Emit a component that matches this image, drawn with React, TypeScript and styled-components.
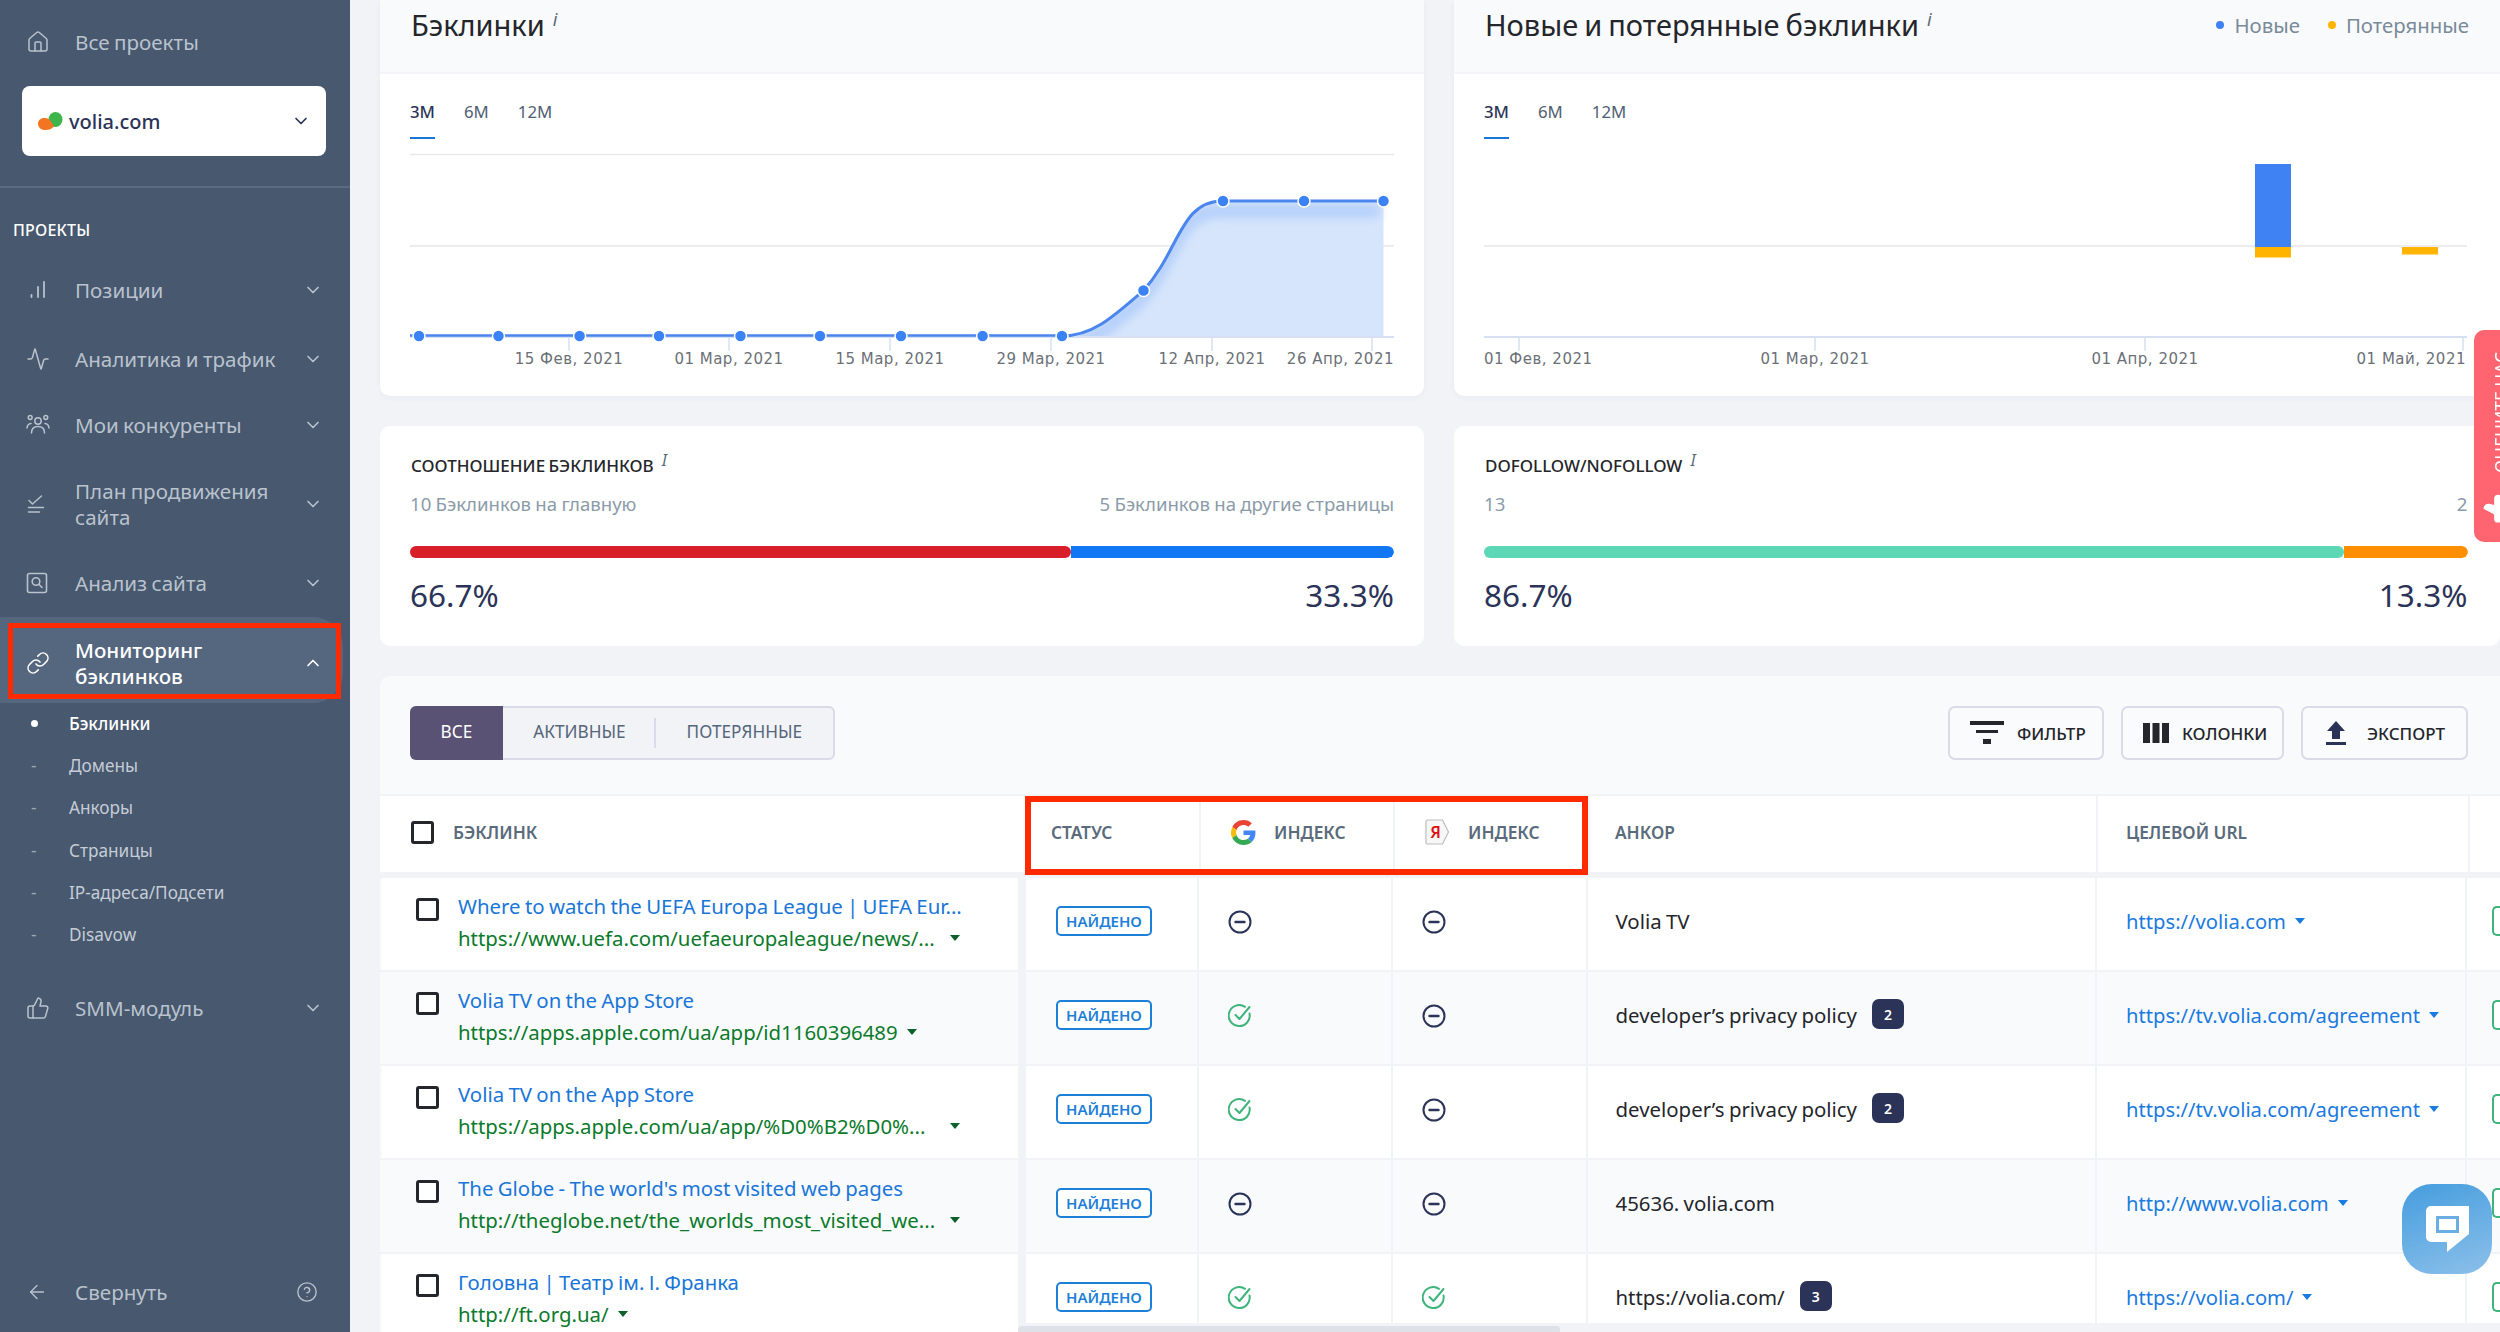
import React from 'react';
import styled, { createGlobalStyle } from 'styled-components';
import {
  Activity,
  ArrowLeft,
  ChevronDown,
  ChevronUp,
  CircleHelp,
  House,
  Link as LinkIcon,
  ThumbsUp,
} from 'lucide-react';

const FONT = '"Noto Sans", "Open Sans", sans-serif';
const HEAD_COLS = '645px 174px 194px 195px 508px 372px 31px';
const BODY_COLS = '638px 8px 171px 194px 194.5px 509.5px 370px 35px';

const GlobalStyle = createGlobalStyle`
  html, body {
    margin: 0;
    padding: 0;
    background: #f2f3f7;
    font-family: ${FONT};
  }
  * { box-sizing: border-box; }
`;

const Page = styled.div`
  position: relative;
  display: flex;
  width: 2500px;
  height: 1332px;
  overflow: hidden;
  background: #f2f3f7;
`;

/* ---------- sidebar ---------- */

const Sidebar = styled.aside`
  flex: 0 0 350px;
  display: flex;
  flex-direction: column;
  height: 100%;
  background: #47586f;
  color: #b9c2cd;
`;

const TopLink = styled.div`
  display: flex;
  align-items: center;
  height: 66px;
  margin-top: 9px;
  padding-left: 26px;
  font-size: 20.6px;
  word-spacing: -1px;
`;

const IconSlot = styled.span`
  flex: 0 0 49px;
  display: flex;
  align-items: center;
  color: #b9c2cd;
  svg { display: block; }
`;

const ProjectSelect = styled.div`
  display: flex;
  align-items: center;
  height: 70px;
  margin: 11px 24px 0 22px;
  padding: 0 15px 0 16px;
  background: #fff;
  border-radius: 8px;
  color: #2b3358;
  font-size: 20px;
  font-weight: 500;
  svg { flex: none; }
  span { flex: 1; margin-left: 6px; }
`;

const Divider = styled.div`
  height: 2px;
  margin-top: 30px;
  background: #5a6a80;
`;

const SectionLabel = styled.div`
  height: 20px;
  margin: 32px 0 16.5px 13px;
  color: #fff;
  font-size: 16px;
  line-height: 20px;
  font-weight: 500;
  letter-spacing: 0.2px;
`;

const NavItem = styled.div<{ $tall?: boolean; $after?: number }>`
  display: flex;
  align-items: center;
  min-height: ${(p) => (p.$tall ? 92 : 66)}px;
  margin-bottom: ${(p) => p.$after ?? 0}px;
  padding: 0 27px 0 26px;
  font-size: 20.6px;
  line-height: 26px;
  word-spacing: -1px;
`;

const ActiveItem = styled.div`
  position: relative;
  display: flex;
  align-items: center;
  height: 86px;
  margin: 1px 7px 0 0;
  padding: 6px 20px 0 26px;
  background: #55667f;
  border-radius: 0 30px 30px 0;
  color: #fff;
  font-size: 20.6px;
  line-height: 26px;
  font-weight: 500;
  ${IconSlot} { color: #fff; }
  &::after {
    content: '';
    position: absolute;
    left: 8px;
    right: 2px;
    top: 6px;
    bottom: 4px;
    border: 5px solid #ff2a00;
  }
`;

const NavText = styled.span`
  flex: 1;
`;

const SubList = styled.div`
  margin: -1px 0 19.5px;
`;

const SubItem = styled.div<{ $current?: boolean }>`
  display: flex;
  align-items: center;
  height: 42.3px;
  padding-left: 31px;
  color: ${(p) => (p.$current ? '#fff' : '#c5ccd6')};
  font-size: 17.2px;
  font-weight: ${(p) => (p.$current ? 500 : 400)};
  &::before {
    content: '${(p) => (p.$current ? '' : '-')}';
    flex: none;
    width: 7px;
    height: ${(p) => (p.$current ? '7px' : 'auto')};
    margin-right: 31px;
    border-radius: 50%;
    background: ${(p) => (p.$current ? '#fff' : 'transparent')};
    color: #9ba6b4;
  }
`;

const SidebarFooter = styled.div`
  display: flex;
  align-items: center;
  margin-top: auto;
  height: 40px;
  margin-bottom: 20px;
  padding: 0 32px 0 26px;
  font-size: 20.6px;
`;

/* ---------- main ---------- */

const Main = styled.main`
  flex: 1;
  min-width: 0;
  padding-left: 30px;
  display: flex;
  flex-direction: column;
  gap: 30px;
`;

const CardGrid = styled.div`
  display: grid;
  grid-template-columns: 1044px 1046px;
  column-gap: 30px;
  row-gap: 30px;
`;

const ChartCard = styled.section`
  height: 396px;
  background: #fff;
  border-radius: 0 0 10px 10px;
  box-shadow: 0 2px 6px rgba(50, 60, 90, 0.04);
`;

const ChartHead = styled.header`
  display: flex;
  align-items: flex-start;
  justify-content: space-between;
  height: 74px;
  padding: 5px 31px 0 31px;
  background: #f9fafc;
  border-bottom: 2px solid #f4f5f8;
`;

const ChartTitle = styled.h2`
  margin: 0;
  color: #24262b;
  font-size: 29px;
  line-height: 40px;
  font-weight: 400;
  word-spacing: -1.5px;
`;

const Hint = styled.sup<{ $small?: boolean }>`
  margin-left: 8px;
  color: #5a6b7b;
  font-size: ${(p) => (p.$small ? 16 : 18)}px;
  font-style: italic;
  font-weight: 400;
  line-height: 0;
  vertical-align: ${(p) => (p.$small ? 6 : 10)}px;
`;

const Legend = styled.div`
  display: flex;
  gap: 28px;
  margin-top: 5px;
  color: #7a8b99;
  font-size: 20.4px;
  line-height: 30px;
`;

const LegendItem = styled.span<{ $color: string }>`
  display: flex;
  align-items: center;
  gap: 10px;
  &::before {
    content: '';
    width: 8px;
    height: 8px;
    border-radius: 50%;
    background: ${(p) => p.$color};
  }
`;

const RangeTabs = styled.div`
  display: flex;
  gap: 29px;
  height: 40px;
  margin: 24px 0 0 30px;
`;

const RangeTab = styled.div<{ $active?: boolean }>`
  height: 41px;
  padding-top: 2px;
  color: ${(p) => (p.$active ? '#2b3358' : '#4f6072')};
  font-size: 16.8px;
  line-height: 24px;
  font-weight: ${(p) => (p.$active ? 500 : 400)};
  border-bottom: ${(p) => (p.$active ? '2px solid #1976d8' : '2px solid transparent')};
`;

const ChartSvg = styled.svg`
  display: block;
  margin-top: 12px;
  text {
    fill: #6b7076;
    font-family: "DejaVu Sans", sans-serif;
    font-size: 15px;
    letter-spacing: 0.5px;
  }
`;

const RatioCard = styled.section<{ $right: number }>`
  height: 220px;
  padding: 26px ${(p) => p.$right}px 0 30px;
  background: #fff;
  border-radius: 10px;
`;

const RatioTitle = styled.h3`
  margin: 0;
  padding-left: 1px;
  color: #24262b;
  font-size: 17px;
  line-height: 28px;
  font-weight: 500;
  text-transform: uppercase;
  word-spacing: -1px;
`;

const RatioRow = styled.div`
  display: flex;
  justify-content: space-between;
`;

const RatioCaption = styled(RatioRow)`
  margin-top: 10px;
  color: #8b9ba9;
  font-size: 18.6px;
  line-height: 28px;
  word-spacing: -0.5px;
`;

const RatioBar = styled.div`
  display: flex;
  height: 12px;
  margin-top: 28px;
  border-radius: 6px;
  overflow: hidden;
`;

const RatioFill = styled.div<{ $color: string }>`
  background: ${(p) => p.$color};
  border-radius: 0 6px 6px 0;
  &:first-child { position: relative; z-index: 1; }
`;

const RatioValues = styled(RatioRow)`
  margin-top: 15px;
  color: #2b3358;
  font-size: 31.5px;
  line-height: 44px;
  font-weight: 400;
`;

/* ---------- table ---------- */

const TablePanel = styled.section`
  flex: 1;
  min-height: 0;
  position: relative;
  overflow: hidden;
  background: #f9fafc;
  border-radius: 10px 0 0 0;
`;

const Toolbar = styled.div`
  display: flex;
  align-items: center;
  justify-content: space-between;
  height: 116px;
  padding: 0 32px 6px 30px;
  margin-top: 2px;
`;

const Segments = styled.div`
  display: flex;
  align-items: center;
  height: 54px;
  border: 2px solid #d9dce8;
  border-radius: 6px;
  background: #f2f3f7;
`;

const Segment = styled.div<{ $active?: boolean; $line?: boolean }>`
  display: flex;
  align-items: center;
  justify-content: center;
  position: relative;
  height: 54px;
  padding: 0 30.5px 3px;
  margin: ${(p) => (p.$active ? '0 0 0 -2px' : '0')};
  background: ${(p) => (p.$active ? '#5a5275' : 'transparent')};
  border-radius: ${(p) => (p.$active ? '6px 0 0 6px' : '0')};
  color: ${(p) => (p.$active ? '#fff' : '#56667a')};
  font-size: 17.2px;
  font-weight: 400;
  &::after {
    content: '';
    display: ${(p) => (p.$line ? 'block' : 'none')};
    position: absolute;
    right: 0;
    top: 12px;
    bottom: 12px;
    width: 2px;
    background: #d9dce8;
  }
`;

const ToolButtons = styled.div`
  display: flex;
  gap: 17px;
`;

const ToolButton = styled.div<{ $w: number; $pad?: number; $gap?: number }>`
  display: flex;
  align-items: center;
  gap: ${(p) => p.$gap ?? 13}px;
  width: ${(p) => p.$w}px;
  height: 54px;
  padding-left: ${(p) => p.$pad ?? 20}px;
  border: 2px solid #d9dce8;
  border-radius: 7px;
  background: #fafbfd;
  color: #24262b;
  font-size: 17px;
  font-weight: 500;
`;

const HeadRow = styled.div`
  display: grid;
  grid-template-columns: ${HEAD_COLS};
  height: 78px;
  background: #fff;
  border-top: 2px solid #f2f3f7;
`;

const HeadCell = styled.div<{ $pad?: number; $gap?: number }>`
  display: flex;
  align-items: center;
  gap: ${(p) => p.$gap ?? 18}px;
  padding: 0 0 4px ${(p) => p.$pad ?? 30}px;
  border-left: 2px solid #f2f3f7;
  color: #5a6b7b;
  font-size: 17.3px;
  font-weight: 600;
  &:first-child { border-left: 0; }
`;

const HeadGroup = styled.div`
  position: relative;
  grid-column: span 3;
  display: grid;
  grid-template-columns: 174px 194px 195px;
  &::after {
    content: '';
    position: absolute;
    left: 0;
    right: 0;
    top: 0;
    bottom: -3px;
    border: 6px solid #ff2a00;
  }
`;

const BodySpacer = styled.div`
  height: 6px;
  background: #f2f3f7;
`;

const BodyRow = styled.div<{ $alt?: boolean }>`
  display: grid;
  grid-template-columns: ${BODY_COLS};
  height: 94px;
  background: ${(p) => (p.$alt ? '#f9fafc' : '#fff')};
  border-bottom: 2px solid #f2f3f7;
`;

const Gutter = styled.div`
  background: #f2f3f7;
`;

const Cell = styled.div<{ $pad?: number }>`
  display: flex;
  align-items: center;
  padding: 0 0 6px ${(p) => p.$pad ?? 30}px;
  border-left: 2px solid #f2f3f7;
  color: #24262b;
  font-size: 20.4px;
  word-spacing: -1px;
  &:nth-child(3) { border-left: 0; }
  > svg { margin-top: 2px; }
`;

const LinkCell = styled.div`
  display: flex;
  align-items: flex-start;
  gap: 19px;
  padding: 20px 0 0 34px;
  border-left: 2px solid #f9fafc;
`;

const Box = styled.span`
  flex: none;
  display: block;
  width: 23px;
  height: 23px;
  border: 3px solid #24262b;
  border-radius: 3px;
  background: #fff;
`;

const LinkText = styled.div`
  margin-top: -8px;
  font-size: 20.4px;
  line-height: 32px;
  white-space: nowrap;
  word-spacing: -1px;
`;

const PageLink = styled.div`
  color: #1976d8;
`;

const SourceUrl = styled.div<{ $cut?: boolean }>`
  display: flex;
  align-items: center;
  justify-content: ${(p) => (p.$cut ? 'space-between' : 'flex-start')};
  width: ${(p) => (p.$cut ? '502px' : 'auto')};
  color: #0b7a2b;
`;

const Caret = styled.span<{ $color?: string }>`
  flex: none;
  width: 0;
  height: 0;
  margin-left: 9px;
  border-left: 5px solid transparent;
  border-right: 5px solid transparent;
  border-top: 6px solid ${(p) => p.$color ?? '#0d5f2c'};
`;

const FoundTag = styled.span`
  display: flex;
  align-items: center;
  justify-content: center;
  width: 96px;
  height: 30px;
  border: 2px solid #1e7fd8;
  border-radius: 5px;
  background: #fff;
  color: #1e7fd8;
  font-size: 15px;
  font-weight: 600;
`;

const CountBadge = styled.span`
  display: flex;
  align-items: center;
  justify-content: center;
  width: 32px;
  height: 30px;
  margin: -2px 0 0 15px;
  border-radius: 7px;
  background: #2b3358;
  color: #fff;
  font-size: 14px;
  font-weight: 600;
`;

const TargetLink = styled.span`
  display: flex;
  align-items: center;
  color: #1a7ae0;
  font-size: 20.2px;
`;

const EdgeTag = styled.span`
  display: block;
  width: 20px;
  height: 30px;
  border: 2px solid #3fb47c;
  border-right: 0;
  border-radius: 5px 0 0 5px;
  background: #fff;
`;

const ScrollTrack = styled.div`
  position: absolute;
  left: 638px;
  right: 0;
  bottom: 0;
  height: 9px;
  background: #f2f3f7;
  display: flex;
  align-items: flex-end;
`;

const ScrollThumb = styled.div`
  width: 542px;
  height: 6px;
  background: #dfe1e9;
  border-radius: 4px 4px 0 0;
`;

/* ---------- overlays ---------- */

const RateTab = styled.div`
  position: absolute;
  left: 2474px;
  top: 330px;
  width: 40px;
  height: 212px;
  padding: 23px 0 0 14px;
  background: #ff6570;
  border-radius: 10px;
  color: #fff;
  overflow: hidden;
`;

const RateText = styled.div`
  writing-mode: vertical-rl;
  transform: rotate(180deg);
  height: 120px;
  font-size: 17.5px;
  line-height: 26px;
  white-space: nowrap;
`;

const RateThumb = styled.div`
  position: absolute;
  left: 10px;
  top: 160px;
  transform: rotate(-90deg);
`;

const ChatButton = styled.div`
  position: absolute;
  left: 2402px;
  top: 1184px;
  display: flex;
  align-items: center;
  justify-content: center;
  width: 90px;
  height: 90px;
  border-radius: 30px;
  background: linear-gradient(160deg, #459dde, #8cc0ea);
`;

/* ---------- drawings ---------- */

const pointsX = [419, 498.5, 579.6, 659, 740.5, 820, 901, 982.6, 1062, 1143.5, 1223, 1304, 1383.5];
const pointsY = [336, 336, 336, 336, 336, 336, 336, 336, 336, 290.5, 201, 201, 201];
const curve = 'M1062 336 C1092 336 1112 318 1143.5 290.5 C1180 250 1180 201 1223 201 L1383.5 201';

const BacklinksChart: React.FC = () => (
  <ChartSvg width={1044} height={226} viewBox="380 150 1044 226">
    <defs>
      <filter id="soft" x="-10%" y="-20%" width="120%" height="140%">
        <feGaussianBlur stdDeviation="5" />
      </filter>
      <clipPath id="areaClip">
        <path d={`${curve} L1394 201 L1394 337 L1062 337 Z`} />
      </clipPath>
    </defs>
    <line x1="410" x2="1394" y1="154.5" y2="154.5" stroke="#e8e8ea" strokeWidth="1.5" />
    <line x1="410" x2="1394" y1="246" y2="246" stroke="#e6e6e8" strokeWidth="1.5" />
    <path d={`${curve} L1383.5 337 L1062 337 Z`} fill="#d6e5fb" />
    <g clipPath="url(#areaClip)">
      <path d={curve} transform="translate(-4 10)" fill="none" stroke="#b6d0fb" strokeWidth="14" filter="url(#soft)" />
    </g>
    <line x1="410" x2="1394" y1="337" y2="337" stroke="#d6e0f2" strokeWidth="2" />
    {[569, 729, 890, 1051, 1212, 1372].map((x) => (
      <line key={x} x1={x} x2={x} y1="337" y2="351" stroke="#d6e0f2" strokeWidth="1.5" />
    ))}
    <line x1="410" x2="1062" y1="335.5" y2="335.5" stroke="#4a86ee" strokeWidth="2.5" />
    <path d={curve} fill="none" stroke="#4a86ee" strokeWidth="3" />
    {pointsX.map((x, i) => (
      <circle key={x} cx={x} cy={pointsY[i]} r="6" fill="#3b82f6" stroke="#fff" strokeWidth="1.5" />
    ))}
    <text x="569" y="364" textAnchor="middle">15 Фев, 2021</text>
    <text x="729" y="364" textAnchor="middle">01 Мар, 2021</text>
    <text x="890" y="364" textAnchor="middle">15 Мар, 2021</text>
    <text x="1051" y="364" textAnchor="middle">29 Мар, 2021</text>
    <text x="1212" y="364" textAnchor="middle">12 Апр, 2021</text>
    <text x="1394" y="364" textAnchor="end">26 Апр, 2021</text>
  </ChartSvg>
);

const GainLossChart: React.FC = () => (
  <ChartSvg width={1046} height={226} viewBox="1454 150 1046 226">
    <line x1="1484" x2="2467" y1="246" y2="246" stroke="#e6e6e8" strokeWidth="1.5" />
    <rect x="2255" y="164" width="36" height="83" fill="#3f82f4" />
    <rect x="2255" y="247" width="36" height="10.5" fill="#ffb500" />
    <rect x="2402" y="247" width="36" height="7.5" fill="#ffb500" />
    <line x1="1484" x2="2467" y1="337" y2="337" stroke="#d6e0f2" strokeWidth="2" />
    {[1519, 1815, 2145, 2463].map((x) => (
      <line key={x} x1={x} x2={x} y1="337" y2="351" stroke="#d6e0f2" strokeWidth="1.5" />
    ))}
    <text x="1484" y="364">01 Фев, 2021</text>
    <text x="1815" y="364" textAnchor="middle">01 Мар, 2021</text>
    <text x="2145" y="364" textAnchor="middle">01 Апр, 2021</text>
    <text x="2466" y="364" textAnchor="end">01 Май, 2021</text>
  </ChartSvg>
);

const VoliaLogo = () => (
  <svg width="25" height="18" viewBox="0 0 25 18">
    <ellipse cx="17.5" cy="7.5" rx="7" ry="7.5" fill="#3db54a" />
    <path d="M0 11.5C0 7.5 4 5.5 7.5 6c4 .5 6 3.5 8.5 8.5-2 2.5-5 3.5-8.5 3.5C3 18 0 15.5 0 11.5z" fill="#f47521" />
  </svg>
);

const PositionsIcon = () => (
  <svg width="24" height="24" viewBox="0 0 24 24" fill="none" stroke="currentColor" strokeWidth="1.8" strokeLinecap="round">
    <path d="M5.5 19v-2M12 19v-10M18 19v-15" />
  </svg>
);

const CompetitorsIcon = () => (
  <svg width="24" height="22" viewBox="0 0 24 22" fill="none" stroke="currentColor" strokeWidth="1.5" strokeLinecap="round">
    <circle cx="12" cy="7" r="3.2" />
    <circle cx="4.2" cy="3.5" r="1.9" />
    <circle cx="19.8" cy="3.5" r="1.9" />
    <path d="M5.5 19c0-4 2.5-6.5 6.5-6.5s6.5 2.5 6.5 6.5" />
    <path d="M1 14c.3-2.6 1.6-4.2 4-4.4M23 14c-.3-2.6-1.6-4.2-4-4.4" />
  </svg>
);

const PlanIcon = () => (
  <svg width="22" height="22" viewBox="0 0 22 22" fill="none" stroke="currentColor" strokeWidth="1.5" strokeLinecap="round" strokeLinejoin="round">
    <path d="M3 7.5l3.5 3.5 9-8" />
    <path d="M2.5 14.5h15M2.5 19h11" />
  </svg>
);

const AuditIcon = () => (
  <svg width="22" height="22" viewBox="0 0 22 22" fill="none" stroke="currentColor" strokeWidth="1.6" strokeLinecap="round">
    <rect x="1.5" y="1.5" width="19" height="19" rx="2" />
    <circle cx="10" cy="9.5" r="3.8" />
    <path d="M13 12.5l3 3" />
  </svg>
);

const GoogleLogo = () => (
  <svg width="25" height="25" viewBox="0 0 48 48">
    <path fill="#EA4335" d="M24 9.5c3.54 0 6.71 1.22 9.21 3.6l6.85-6.85C35.9 2.38 30.47 0 24 0 14.62 0 6.51 5.38 2.56 13.22l7.98 6.19C12.43 13.72 17.74 9.5 24 9.5z" />
    <path fill="#4285F4" d="M46.98 24.55c0-1.57-.15-3.09-.38-4.55H24v9.02h12.94c-.58 2.96-2.26 5.48-4.78 7.18l7.73 6c4.51-4.18 7.09-10.36 7.09-17.65z" />
    <path fill="#FBBC05" d="M10.53 28.59c-.48-1.45-.76-2.99-.76-4.59s.27-3.14.76-4.59l-7.98-6.19C.92 16.46 0 20.12 0 24c0 3.88.92 7.54 2.56 10.78l7.97-6.19z" />
    <path fill="#34A853" d="M24 48c6.48 0 11.93-2.13 15.89-5.81l-7.73-6c-2.15 1.45-4.92 2.3-8.16 2.3-6.26 0-11.57-4.22-13.47-9.91l-7.98 6.19C6.51 42.62 14.62 48 24 48z" />
  </svg>
);

const YandexLogo = () => (
  <svg width="25" height="26" viewBox="0 0 25 26">
    <path d="M2.5 1h15l6 12-6 12h-15A1.5 1.5 0 0 1 1 23.5v-21A1.5 1.5 0 0 1 2.5 1z" fill="#f7f7f7" stroke="#bdbdbd" strokeWidth="1.2" />
    <text x="10.5" y="19" textAnchor="middle" fill="#e01010" fontSize="16" fontFamily="Noto Sans, sans-serif">Я</text>
  </svg>
);

const MinusMark = () => (
  <svg width="24" height="24" viewBox="0 0 24 24" fill="none" stroke="#2b3358" strokeWidth="2" strokeLinecap="round">
    <circle cx="12" cy="12" r="10.5" />
    <path d="M7.5 12h9" strokeWidth="2.4" />
  </svg>
);

const CheckMark = () => (
  <svg width="24" height="24" viewBox="0 0 24 24" fill="none" stroke="#3fb47c" strokeWidth="2" strokeLinecap="round" strokeLinejoin="round">
    <path d="M21.5 9.5A10.5 10.5 0 1 1 17 2.8" />
    <path d="M7.5 11l4 4 10-12" />
  </svg>
);

const FilterIcon = () => (
  <svg width="34" height="24" viewBox="0 0 34 24" fill="#24262b">
    <rect x="0" y="0" width="34" height="4" />
    <rect x="6" y="9" width="22" height="3" />
    <rect x="13" y="18" width="8" height="5" />
  </svg>
);

const ColumnsIcon = () => (
  <svg width="26" height="20" viewBox="0 0 26 20" fill="#24262b">
    <rect x="0" y="0" width="7" height="20" />
    <rect x="9.5" y="0" width="7" height="20" />
    <rect x="19" y="0" width="7" height="20" />
  </svg>
);

const ExportIcon = () => (
  <svg width="20" height="24" viewBox="0 0 20 24" fill="#2b3358">
    <path d="M10 0l9 10h-5v8H6v-8H1z" />
    <rect x="0" y="21" width="20" height="3" />
  </svg>
);

const ChatIcon = () => (
  <svg width="43" height="46" viewBox="0 0 43 46">
    <path d="M5 0h38v28L21 46V36H5a5 5 0 0 1-5-5V5a5 5 0 0 1 5-5z" fill="#fff" />
    <rect x="11.5" y="11.5" width="20" height="14" fill="none" stroke="#6aaee4" strokeWidth="3" />
  </svg>
);

/* ---------- data ---------- */

type Mark = 'ok' | 'none';

interface Row {
  title: string;
  url: string;
  google: Mark;
  yandex: Mark;
  anchor: string;
  count?: number;
  target: string;
}

const rows: Row[] = [
  {
    title: 'Where to watch the UEFA Europa League | UEFA Eur...',
    url: 'https://www.uefa.com/uefaeuropaleague/news/...',
    google: 'none',
    yandex: 'none',
    anchor: 'Volia TV',
    target: 'https://volia.com',
  },
  {
    title: 'Volia TV on the App Store',
    url: 'https://apps.apple.com/ua/app/id1160396489',
    google: 'ok',
    yandex: 'none',
    anchor: 'developer’s privacy policy',
    count: 2,
    target: 'https://tv.volia.com/agreement',
  },
  {
    title: 'Volia TV on the App Store',
    url: 'https://apps.apple.com/ua/app/%D0%B2%D0%...',
    google: 'ok',
    yandex: 'none',
    anchor: 'developer’s privacy policy',
    count: 2,
    target: 'https://tv.volia.com/agreement',
  },
  {
    title: 'The Globe - The world\'s most visited web pages',
    url: 'http://theglobe.net/the_worlds_most_visited_we...',
    google: 'none',
    yandex: 'none',
    anchor: '45636. volia.com',
    target: 'http://www.volia.com',
  },
  {
    title: 'Головна | Театр ім. І. Франка',
    url: 'http://ft.org.ua/',
    google: 'ok',
    yandex: 'ok',
    anchor: 'https://volia.com/',
    count: 3,
    target: 'https://volia.com/',
  },
];

const navBefore = [
  { label: 'Позиции', icon: <PositionsIcon />, after: 3.5 },
  { label: 'Аналитика и трафик', icon: <Activity size={24} strokeWidth={1.5} /> },
  { label: 'Мои конкуренты', icon: <CompetitorsIcon /> },
  { label: 'План продвижения сайта', icon: <PlanIcon />, tall: true },
  { label: 'Анализ сайта', icon: <AuditIcon /> },
];

const subItems = ['Домены', 'Анкоры', 'Страницы', 'IP-адреса/Подсети', 'Disavow'];

const App: React.FC = () => (
  <Page>
    <GlobalStyle />
    <Sidebar>
      <TopLink>
        <IconSlot><House size={24} strokeWidth={1.5} /></IconSlot>
        Все проекты
      </TopLink>
      <ProjectSelect>
        <VoliaLogo />
        <span>volia.com</span>
        <ChevronDown size={20} color="#2b3358" />
      </ProjectSelect>
      <Divider />
      <SectionLabel>ПРОЕКТЫ</SectionLabel>
      {navBefore.map((item) => (
        <NavItem key={item.label} $tall={item.tall} $after={item.after}>
          <IconSlot>{item.icon}</IconSlot>
          <NavText>{item.label}</NavText>
          <ChevronDown size={20} />
        </NavItem>
      ))}
      <ActiveItem>
        <IconSlot><LinkIcon size={24} strokeWidth={1.6} /></IconSlot>
        <NavText>Мониторинг<br />бэклинков</NavText>
        <ChevronUp size={20} />
      </ActiveItem>
      <SubList>
        <SubItem $current>Бэклинки</SubItem>
        {subItems.map((s) => (
          <SubItem key={s}>{s}</SubItem>
        ))}
      </SubList>
      <NavItem>
        <IconSlot><ThumbsUp size={24} strokeWidth={1.5} /></IconSlot>
        <NavText>SMM-модуль</NavText>
        <ChevronDown size={20} />
      </NavItem>
      <SidebarFooter>
        <IconSlot><ArrowLeft size={22} strokeWidth={1.5} /></IconSlot>
        <NavText>Свернуть</NavText>
        <CircleHelp size={22} strokeWidth={1.5} />
      </SidebarFooter>
    </Sidebar>

    <Main>
      <CardGrid>
        <ChartCard>
          <ChartHead>
            <ChartTitle>Бэклинки<Hint>i</Hint></ChartTitle>
          </ChartHead>
          <RangeTabs>
            <RangeTab $active>3М</RangeTab>
            <RangeTab>6М</RangeTab>
            <RangeTab>12М</RangeTab>
          </RangeTabs>
          <BacklinksChart />
        </ChartCard>
        <ChartCard>
          <ChartHead>
            <ChartTitle>Новые и потерянные бэклинки<Hint>i</Hint></ChartTitle>
            <Legend>
              <LegendItem $color="#3f82f4">Новые</LegendItem>
              <LegendItem $color="#ffb500">Потерянные</LegendItem>
            </Legend>
          </ChartHead>
          <RangeTabs>
            <RangeTab $active>3М</RangeTab>
            <RangeTab>6М</RangeTab>
            <RangeTab>12М</RangeTab>
          </RangeTabs>
          <GainLossChart />
        </ChartCard>
        <RatioCard $right={30}>
          <RatioTitle>Соотношение бэклинков<Hint $small>i</Hint></RatioTitle>
          <RatioCaption>
            <span>10 Бэклинков на главную</span>
            <span>5 Бэклинков на другие страницы</span>
          </RatioCaption>
          <RatioBar>
            <RatioFill $color="#d81e28" style={{ width: '67.2%' }} />
            <RatioFill $color="#1277f5" style={{ flex: 1 }} />
          </RatioBar>
          <RatioValues>
            <span>66.7%</span>
            <span>33.3%</span>
          </RatioValues>
        </RatioCard>
        <RatioCard $right={32.5}>
          <RatioTitle>DOFOLLOW/NOFOLLOW<Hint $small>i</Hint></RatioTitle>
          <RatioCaption>
            <span>13</span>
            <span>2</span>
          </RatioCaption>
          <RatioBar>
            <RatioFill $color="#5cd8b6" style={{ width: '87.4%' }} />
            <RatioFill $color="#ff8f00" style={{ flex: 1 }} />
          </RatioBar>
          <RatioValues>
            <span>86.7%</span>
            <span>13.3%</span>
          </RatioValues>
        </RatioCard>
      </CardGrid>

      <TablePanel>
        <Toolbar>
          <Segments>
            <Segment $active>ВСЕ</Segment>
            <Segment $line>АКТИВНЫЕ</Segment>
            <Segment>ПОТЕРЯННЫЕ</Segment>
          </Segments>
          <ToolButtons>
            <ToolButton $w={156}><FilterIcon />ФИЛЬТР</ToolButton>
            <ToolButton $w={163}><ColumnsIcon />КОЛОНКИ</ToolButton>
            <ToolButton $w={167} $pad={23} $gap={21}><ExportIcon />ЭКСПОРТ</ToolButton>
          </ToolButtons>
        </Toolbar>

        <HeadRow>
          <HeadCell $pad={31} $gap={19}><Box />БЭКЛИНК</HeadCell>
          <HeadGroup>
            <HeadCell $pad={26}>СТАТУС</HeadCell>
            <HeadCell $pad={30}><GoogleLogo />ИНДЕКС</HeadCell>
            <HeadCell $pad={30}><YandexLogo />ИНДЕКС</HeadCell>
          </HeadGroup>
          <HeadCell $pad={25}>АНКОР</HeadCell>
          <HeadCell $pad={28}>ЦЕЛЕВОЙ URL</HeadCell>
          <HeadCell />
        </HeadRow>
        <BodySpacer />

        {rows.map((row, i) => (
          <BodyRow key={row.url} $alt={i % 2 === 1}>
            <LinkCell>
              <Box />
              <LinkText>
                <PageLink>{row.title}</PageLink>
                <SourceUrl $cut={row.url.endsWith('...')}>
                  {row.url}
                  <Caret />
                </SourceUrl>
              </LinkText>
            </LinkCell>
            <Gutter />
            <Cell><FoundTag>НАЙДЕНО</FoundTag></Cell>
            <Cell $pad={29}>{row.google === 'ok' ? <CheckMark /> : <MinusMark />}</Cell>
            <Cell $pad={29}>{row.yandex === 'ok' ? <CheckMark /> : <MinusMark />}</Cell>
            <Cell $pad={28}>
              {row.anchor}
              {row.count ? <CountBadge>{row.count}</CountBadge> : null}
            </Cell>
            <Cell $pad={29}>
              <TargetLink>
                {row.target}
                <Caret $color="#1a7ae0" />
              </TargetLink>
            </Cell>
            <Cell $pad={25}><EdgeTag /></Cell>
          </BodyRow>
        ))}
        <ScrollTrack><ScrollThumb /></ScrollTrack>
      </TablePanel>
    </Main>

    <RateTab>
      <RateText>ОЦЕНИТЕ НАС</RateText>
      <RateThumb><ThumbsUp size={32} fill="#fff" strokeWidth={1} /></RateThumb>
    </RateTab>
    <ChatButton><ChatIcon /></ChatButton>
  </Page>
);

export default App;
